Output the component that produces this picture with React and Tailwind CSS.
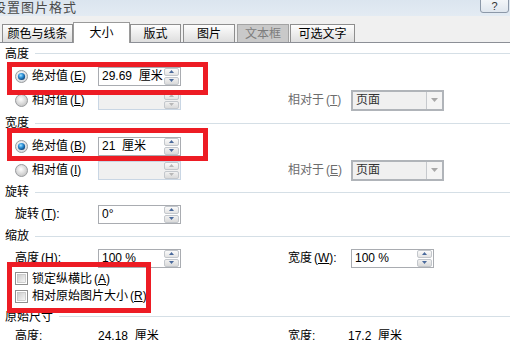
import React from "react";

const Key = ({ k }) => (
  <span className="ml-[2px]">
    (<span className="underline underline-offset-[1px]">{k}</span>)
  </span>
);

function Radio({ checked }) {
  return (
    <svg width="13" height="13" viewBox="0 0 13 13" className="shrink-0">
      <defs>
        <radialGradient id={checked ? "rbg1" : "rbg0"} cx="45%" cy="40%" r="65%">
          <stop offset="0" stopColor="#ffffff" />
          <stop offset="1" stopColor={checked ? "#cfd3d8" : "#bfbfbf"} />
        </radialGradient>
        <radialGradient id="rdot" cx="40%" cy="35%" r="70%">
          <stop offset="0" stopColor="#a8e4ff" />
          <stop offset="0.45" stopColor="#2d92da" />
          <stop offset="1" stopColor="#0a3a6c" />
        </radialGradient>
      </defs>
      <circle cx="6.5" cy="6.5" r="6" fill={`url(#${checked ? "rbg1" : "rbg0"})`} stroke="#9a9c9f" />
      {checked && <circle cx="6.5" cy="6.5" r="3.6" fill="url(#rdot)" />}
    </svg>
  );
}

function Check() {
  return (
    <svg width="13" height="13" viewBox="0 0 13 13" className="shrink-0">
      <defs>
        <linearGradient id="cbg" x1="0" y1="0" x2="1" y2="1">
          <stop offset="0" stopColor="#cbcbcb" />
          <stop offset="1" stopColor="#f7f7f7" />
        </linearGradient>
      </defs>
      <rect x="0.5" y="0.5" width="12" height="12" fill="#fff" stroke="#8f8f8f" />
      <rect x="2.5" y="2.5" width="8" height="8" fill="url(#cbg)" stroke="#b5b5b5" strokeWidth="0.6" />
    </svg>
  );
}

function Spinner({ disabled }) {
  const arrow = disabled ? "#b7b7b7" : "#4a6a9c";
  return (
    <div className="flex flex-col w-[15px] h-[17px] gap-px mr-px">
      <div className="flex-1 flex items-center justify-center border border-[#c3c7cc] rounded-[2px] bg-[linear-gradient(#fbfbfb,#e3e3e3)]">
        <svg width="5" height="3" viewBox="0 0 5 3"><path d="M2.5 0L5 3H0z" fill={arrow} /></svg>
      </div>
      <div className="flex-1 flex items-center justify-center border border-[#c3c7cc] rounded-[2px] bg-[linear-gradient(#f1f1f1,#dadada)]">
        <svg width="5" height="3" viewBox="0 0 5 3"><path d="M0 0H5L2.5 3z" fill={arrow} /></svg>
      </div>
    </div>
  );
}

function Spin({ value, disabled, w = "w-[83px]" }) {
  return (
    <div
      className={`${w} h-[19px] flex items-center justify-between border ${
        disabled ? "border-[#c9d6e4] bg-[#f0f0f0]" : "border-[#a9acb1] bg-white"
      }`}
    >
      <span className="pl-[3px] whitespace-pre">{value}</span>
      <Spinner disabled={disabled} />
    </div>
  );
}

function Select() {
  return (
    <div className="w-[93px] h-[21px] flex items-center justify-between border-2 border-[#b0b4b9] bg-[#f0f0f0]">
      <span className="pl-[3px] text-[#333]">页面</span>
      <div className="w-[16px] h-full flex items-center justify-center border-l border-[#c6c9cd] bg-[#f4f4f4]">
        <svg width="7" height="4" viewBox="0 0 7 4"><path d="M0 0H7L3.5 4z" fill="#a8a8a8" /></svg>
      </div>
    </div>
  );
}

function Section({ label, h }) {
  return (
    <div className={`flex items-center ${h}`}>
      <span className="pl-[5px]">{label}</span>
      <div className="flex-1 ml-[6px] h-px bg-[#d5dfe6]" />
    </div>
  );
}

const tabBase =
  "h-[18px] flex items-center justify-center border border-b-0 border-[#8e8e8e] bg-[linear-gradient(#fdfdfd,#dedede)]";

export default function App() {
  return (
    <div className="relative w-[510px] h-[340px] overflow-hidden bg-white text-[12px] leading-none text-black font-['Liberation_Sans','Noto_Sans_CJK_SC',sans-serif]">
      {/* title bar */}
      <div className="h-[16px] flex items-start justify-between bg-[linear-gradient(#dbe5ef,#e3ebf3)]">
        <span className="ml-[-7px] mt-[1px] text-[13px] text-[#4a4a4a] tracking-[1px]">设置图片格式</span>
        <div className="mt-[-3px] mr-[1px] w-[29px] h-[16px] flex items-center justify-center pt-[2px] border border-[#8c98a8] rounded-[3px] bg-[linear-gradient(#f6f8fa,#dfe6ee)] text-[11px] text-[#333]">
          ?
        </div>
      </div>

      {/* tabs */}
      <div className="h-[27px] flex items-end bg-[#f0f0f0] border-b border-[#8c8f96]">
        <div className={`${tabBase} ml-[2px] w-[71px]`}>颜色与线条</div>
        <div className="h-[21px] w-[57px] mb-[-1px] flex items-center justify-center border border-b-0 border-[#9a9a9a] bg-white">
          大小
        </div>
        <div className={`${tabBase} w-[51px]`}>版式</div>
        <div className={`${tabBase} ml-[2px] w-[52px]`}>图片</div>
        <div className="h-[18px] ml-[2px] w-[52px] flex items-center justify-center border border-b-0 border-[#a3a3a3] bg-[#c9c9c9] text-[#7d7d7d]">
          文本框
        </div>
        <div className={`${tabBase} ml-[1px] w-[65px]`}>可选文字</div>
      </div>

      {/* panel */}
      <Section label="高度" h="h-[21px]" />
      <div className="flex items-center h-[24px]">
        <div className="w-[290px] flex items-center pl-[15px]">
          <Radio checked />
          <span className="ml-[4px] w-[66px]">绝对值<Key k="E" /></span>
          <Spin value="29.69  厘米" />
        </div>
      </div>
      <div className="flex items-center h-[24px]">
        <div className="w-[288px] flex items-center pl-[15px]">
          <Radio />
          <span className="ml-[4px] w-[66px]">相对值<Key k="L" /></span>
          <Spin value="" disabled />
        </div>
        <span className="w-[63px] text-[#6d6d6d]">相对于<Key k="T" /></span>
        <Select />
      </div>

      <Section label="宽度" h="h-[22px]" />
      <div className="flex items-center h-[24px]">
        <div className="w-[290px] flex items-center pl-[15px]">
          <Radio checked />
          <span className="ml-[4px] w-[66px]">绝对值<Key k="B" /></span>
          <Spin value="21  厘米" />
        </div>
      </div>
      <div className="flex items-center h-[24px]">
        <div className="w-[288px] flex items-center pl-[15px]">
          <Radio />
          <span className="ml-[4px] w-[66px]">相对值<Key k="I" /></span>
          <Spin value="" disabled />
        </div>
        <span className="w-[63px] text-[#6d6d6d]">相对于<Key k="E" /></span>
        <Select />
      </div>

      <Section label="旋转" h="h-[20px]" />
      <div className="flex items-center h-[24px]">
        <div className="w-[290px] flex items-center pl-[15px]">
          <span className="w-[83px]">旋转<Key k="T" />:</span>
          <Spin value="0°" />
        </div>
      </div>

      <Section label="缩放" h="h-[20px]" />
      <div className="flex items-center h-[24px]">
        <div className="w-[288px] flex items-center pl-[15px]">
          <span className="w-[83px]">高度<Key k="H" />:</span>
          <Spin value="100 %" />
        </div>
        <span className="w-[63px]">宽度<Key k="W" />:</span>
        <Spin value="100 %" />
      </div>
      <div className="flex items-center h-[17px] pl-[15px]">
        <Check />
        <span className="ml-[4px]">锁定纵横比<Key k="A" /></span>
      </div>
      <div className="flex items-center h-[18px] pl-[15px]">
        <Check />
        <span className="ml-[4px]">相对原始图片大小<Key k="R" /></span>
      </div>

      <Section label="原始尺寸" h="h-[23px]" />
      <div className="flex items-center h-[16px]">
        <div className="w-[288px] flex items-center pl-[15px]">
          <span className="w-[83px]">高度:</span>
          <span className="whitespace-pre">24.18  厘米</span>
        </div>
        <span className="w-[60px]">宽度:</span>
        <span className="whitespace-pre">17.2  厘米</span>
      </div>

      {/* red annotation boxes */}
      <div className="absolute left-[7px] top-[62px] w-[201px] h-[33px] border-[5px] border-[#ed1c24]" />
      <div className="absolute left-[7px] top-[128px] w-[201px] h-[33px] border-[5px] border-[#ed1c24]" />
      <div className="absolute left-[7px] top-[262px] w-[144px] h-[51px] border-[5px] border-[#ed1c24]" />
    </div>
  );
}
